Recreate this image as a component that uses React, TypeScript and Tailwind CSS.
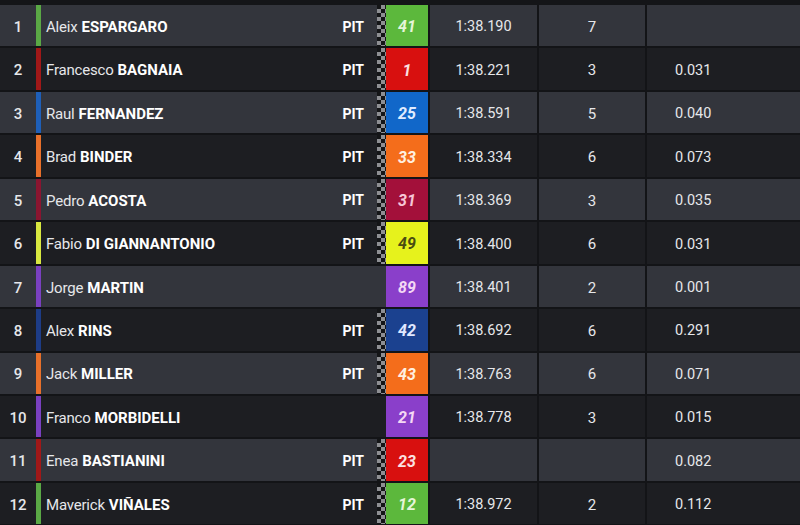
import React from 'react';

interface Rider {
  pos: number;
  first: string;
  last: string;
  pit: boolean;
  num: string;
  bar: string;
  box: string;
  numText: string;
  time: string;
  laps: string;
  gap: string;
}

const riders: Rider[] = [
  { pos: 1, first: 'Aleix', last: 'ESPARGARO', pit: true, num: '41', bar: 'bg-[#5aa845]', box: 'bg-[#5cb83c]', numText: 'text-[#e6f5d8]', time: '1:38.190', laps: '7', gap: '' },
  { pos: 2, first: 'Francesco', last: 'BAGNAIA', pit: true, num: '1', bar: 'bg-[#a01818]', box: 'bg-[#d8100f]', numText: 'text-[#fbe0e0]', time: '1:38.221', laps: '3', gap: '0.031' },
  { pos: 3, first: 'Raul', last: 'FERNANDEZ', pit: true, num: '25', bar: 'bg-[#1e5fb8]', box: 'bg-[#1167c9]', numText: 'text-[#e0ecff]', time: '1:38.591', laps: '5', gap: '0.040' },
  { pos: 4, first: 'Brad', last: 'BINDER', pit: true, num: '33', bar: 'bg-[#e8702a]', box: 'bg-[#f46d1b]', numText: 'text-[#fff0e0]', time: '1:38.334', laps: '6', gap: '0.073' },
  { pos: 5, first: 'Pedro', last: 'ACOSTA', pit: true, num: '31', bar: 'bg-[#8a1530]', box: 'bg-[#a3103a]', numText: 'text-[#f7c6d6]', time: '1:38.369', laps: '3', gap: '0.035' },
  { pos: 6, first: 'Fabio', last: 'DI GIANNANTONIO', pit: true, num: '49', bar: 'bg-[#d8e840]', box: 'bg-[#e6f21c]', numText: 'text-[#4a4c12]', time: '1:38.400', laps: '6', gap: '0.031' },
  { pos: 7, first: 'Jorge', last: 'MARTIN', pit: false, num: '89', bar: 'bg-[#7a40c0]', box: 'bg-[#8a3fca]', numText: 'text-[#f4d8f4]', time: '1:38.401', laps: '2', gap: '0.001' },
  { pos: 8, first: 'Alex', last: 'RINS', pit: true, num: '42', bar: 'bg-[#1d3c86]', box: 'bg-[#1b418f]', numText: 'text-[#e0e8ff]', time: '1:38.692', laps: '6', gap: '0.291' },
  { pos: 9, first: 'Jack', last: 'MILLER', pit: true, num: '43', bar: 'bg-[#e8702a]', box: 'bg-[#f46d1b]', numText: 'text-[#fff0e0]', time: '1:38.763', laps: '6', gap: '0.071' },
  { pos: 10, first: 'Franco', last: 'MORBIDELLI', pit: false, num: '21', bar: 'bg-[#7a40c0]', box: 'bg-[#8a3fca]', numText: 'text-[#f4d8f4]', time: '1:38.778', laps: '3', gap: '0.015' },
  { pos: 11, first: 'Enea', last: 'BASTIANINI', pit: true, num: '23', bar: 'bg-[#a01818]', box: 'bg-[#d8100f]', numText: 'text-[#fbe0e0]', time: '', laps: '', gap: '0.082' },
  { pos: 12, first: 'Maverick', last: 'VIÑALES', pit: true, num: '12', bar: 'bg-[#5aa845]', box: 'bg-[#5cb83c]', numText: 'text-[#e6f5d8]', time: '1:38.972', laps: '2', gap: '0.112' },
];

export default function App() {
  return (
    <div
      className="w-[800px] h-[525px] overflow-hidden bg-[#141518] pt-[5px] text-[14px] text-[#e6e7ea]"
      style={{ fontFamily: 'Roboto, "Liberation Sans", sans-serif' }}
    >
      {riders.map((r, i) => (
        <div
          key={r.pos}
          className={`flex h-[43.45px] border-b-2 border-[#131417] ${i % 2 === 0 ? 'bg-[#33353c]' : 'bg-[#1d1e22]'}`}
        >
          <div className="w-[36px] flex items-center justify-center pt-[3px] font-medium text-[15px]">{r.pos}</div>
          <div className={`w-[5px] ${r.bar}`} />
          <div className="w-[336px] flex items-center pt-[3px] pl-[5px] pr-[13px] text-[15px]">
            <span className="tracking-[-0.2px]">{r.first}</span>
            <span className="ml-[4px] font-bold text-white">{r.last}</span>
            {r.pit && <span className="ml-auto font-bold text-white text-[14px]">PIT</span>}
          </div>
          <div
            className={`w-[9px] ${r.pit ? 'bg-[repeating-conic-gradient(#8e8f93_0_25%,#141517_0_50%)] bg-size-[8px_8px]' : ''}`}
          />
          <div className={`w-[42px] flex items-center justify-center pt-[3px] italic font-bold text-[16px] ${r.box} ${r.numText}`}>
            {r.num}
          </div>
          <div className="w-[109px] border-l-2 border-[#131417] flex items-center justify-center pt-[3px] text-[14.5px]">{r.time}</div>
          <div className="w-[108px] border-l-2 border-[#131417] flex items-center justify-center pt-[3px] text-[15px]">{r.laps}</div>
          <div className="flex-1 border-l-2 border-[#131417] flex items-center pl-[28px] pt-[3px] text-[14.5px]">{r.gap}</div>
        </div>
      ))}
    </div>
  );
}
